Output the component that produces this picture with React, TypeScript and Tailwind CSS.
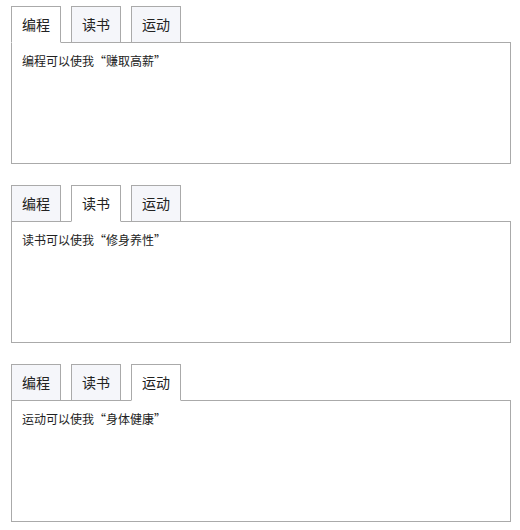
import React from "react";

const tabs = ["编程", "读书", "运动"];
const texts = ["编程可以使我“赚取高薪”", "读书可以使我“修身养性”", "运动可以使我“身体健康”"];

function Section({ active }: { active: number }) {
  return (
    <div className="w-[500px]">
      <div className="flex items-start h-[37px] relative z-10">
        {tabs.map((t, i) => (
          <div
            key={t}
            className={
              "w-[50px] mr-[10px] border border-[#aaaaaa] flex items-center justify-center text-[14px] text-[#222] " +
              (i === active ? "h-[37px] bg-white border-b-white pb-px" : "h-[36px] bg-[#f5f6fa] border-b-0")
            }
          >
            {t}
          </div>
        ))}
      </div>
      <div className="-mt-px h-[122px] border border-[#aaaaaa] bg-white px-[10px] pt-[9px] text-[12px] text-[#222] leading-[18px]">
        {texts[active]}
      </div>
    </div>
  );
}

export default function App() {
  return (
    <div
      className="pl-[11px] pt-[6px] flex flex-col gap-[21px] bg-white min-h-[530px]"
      style={{ fontFamily: '"Noto Sans CJK SC", "Noto Sans", sans-serif' }}
    >
      <Section active={0} />
      <Section active={1} />
      <Section active={2} />
    </div>
  );
}
